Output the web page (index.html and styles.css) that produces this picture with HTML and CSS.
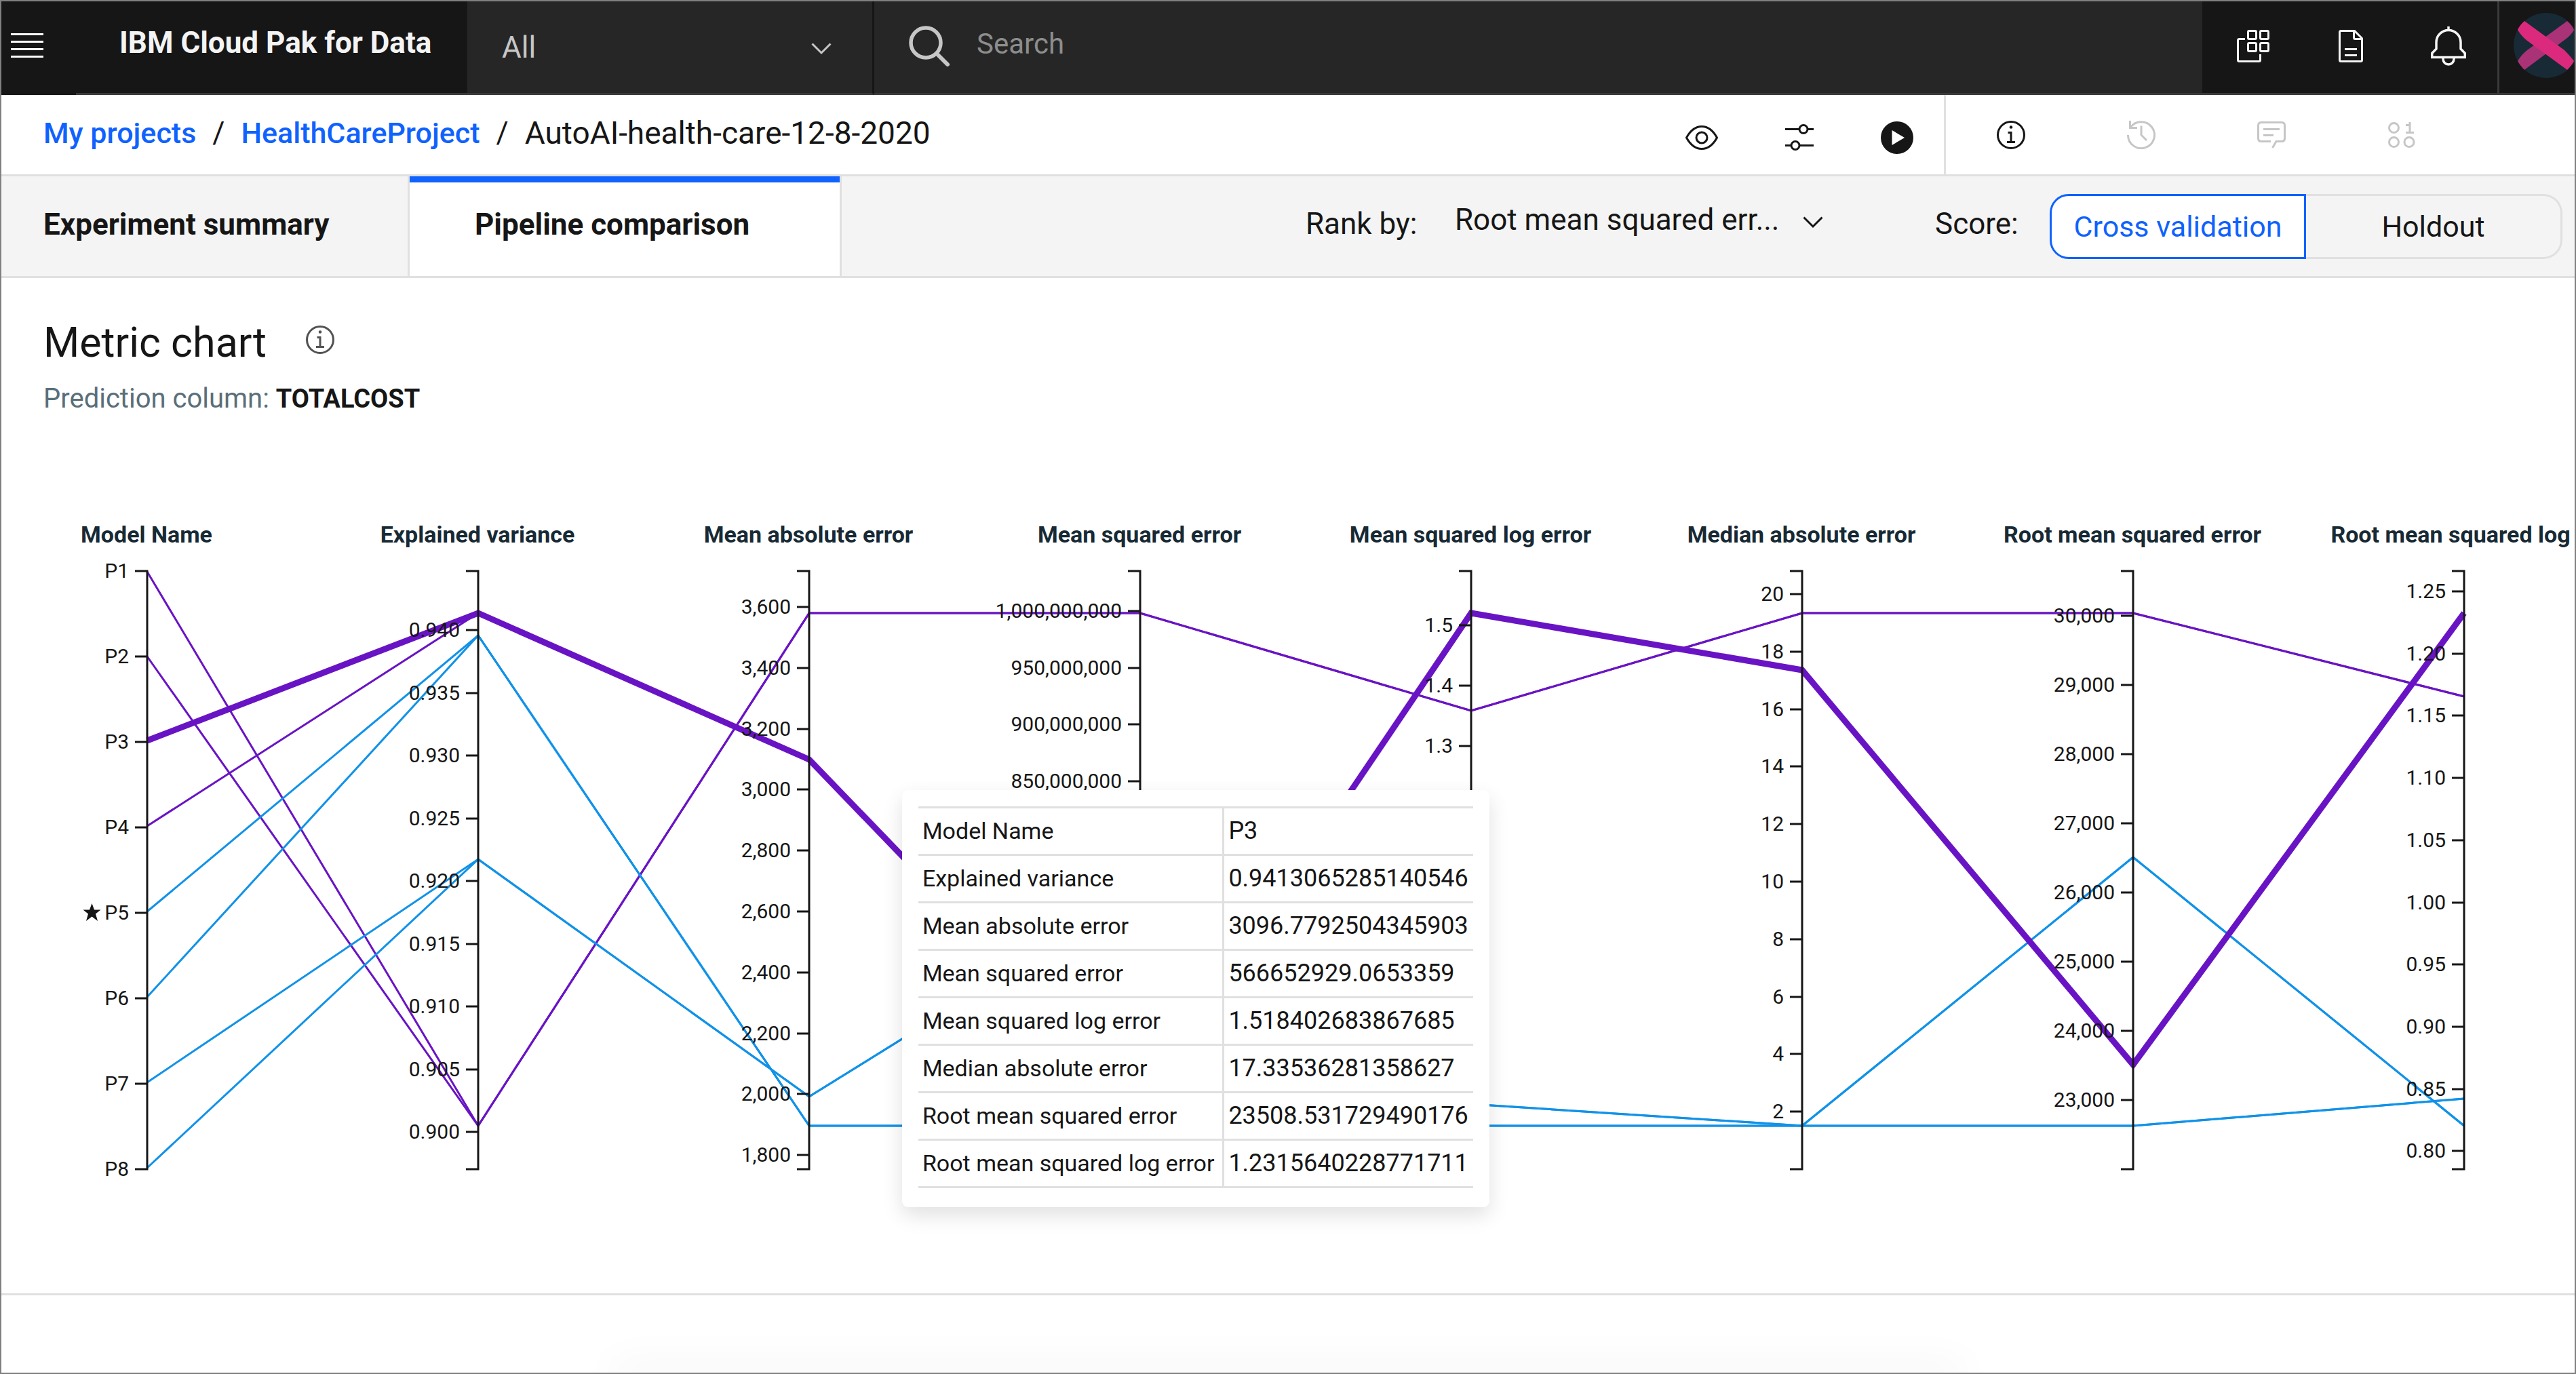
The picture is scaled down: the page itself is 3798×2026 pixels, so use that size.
FILE: index.html
```html
<!DOCTYPE html>
<html lang="en">
<head>
<meta charset="utf-8">
<title>AutoAI-health-care-12-8-2020 - IBM Cloud Pak for Data</title>
<link rel="stylesheet" href="styles.css">
</head>
<body>
<div class="page">
  <header class="topbar">
    <button class="topbar-menu" aria-label="Menu">
      <svg width="48" height="36" viewBox="0 0 48 36"><path d="M0 1.500H48M0 12.500H48M0 23.500H48M0 34.500H48" stroke="#fff" stroke-width="3"/></svg>
    </button>
    <a class="topbar-title" href="#">IBM Cloud Pak for Data</a>
    <div class="scope">
      <select class="scope-select" aria-label="Search scope"><option>All</option></select>
      <svg class="chevron" width="30" height="18" viewBox="0 0 30 18"><path d="M1.500 1.500L15 15L28.500 1.500" fill="none" stroke="#c6c6c6" stroke-width="3"/></svg>
    </div>
    <div class="search">
      <svg width="62" height="62" viewBox="0 0 62 62"><circle cx="25" cy="25" r="22" fill="none" stroke="#c6c6c6" stroke-width="5.500"/><path d="M41 41L57 57" stroke="#c6c6c6" stroke-width="6" stroke-linecap="round"/></svg>
      <input class="search-input" type="search" placeholder="Search" aria-label="Search">
    </div>
    <div class="topbar-actions">
      <button class="topbar-icon" aria-label="Services">
        <svg width="48" height="48" viewBox="0 0 48 48" fill="none" stroke="#f4f4f4" stroke-width="3"><path d="M12 13.500H3.500Q1.500 13.500 1.500 15.500V44.500Q1.500 46.500 3.500 46.500H32.500Q34.500 46.500 34.500 44.500V36"/><rect x="16.500" y="1.500" width="12" height="12" rx="1.500"/><rect x="34.500" y="1.500" width="12" height="12" rx="1.500"/><rect x="16.500" y="19.500" width="12" height="12" rx="1.500"/><rect x="34.500" y="19.500" width="12" height="12" rx="1.500"/></svg>
      </button>
      <button class="topbar-icon" aria-label="Documentation">
        <svg width="36" height="48" viewBox="0 0 36 48" fill="none" stroke="#f4f4f4" stroke-width="3"><path d="M23.500 1.500H3.500Q1.500 1.500 1.500 3.500V44.500Q1.500 46.500 3.500 46.500H32.500Q34.500 46.500 34.500 44.500V12.500Z"/><path d="M22.500 1.500V11.500Q22.500 13.500 24.500 13.500H34.500M9 28.500H27M9 37.500H27"/></svg>
      </button>
      <button class="topbar-icon" aria-label="Notifications">
        <svg width="52" height="58" viewBox="0 0 52 58" fill="none" stroke="#f4f4f4" stroke-width="3.500"><path d="M26 0V6M1.700 45.500V39.500L8 33V23.500A18 18 0 0 1 44 23.500V33L50.300 39.500V45.500ZM18 46V48A8 8 0 0 0 34 48V46"/></svg>
      </button>
    </div>
    <button class="account" aria-label="Account">
      <svg width="96" height="96" viewBox="0 0 96 96"><circle cx="48" cy="48" r="48" fill="#172a35"/><path d="M79 12Q86 18 89 25Q86 31 79 37L16 84Q9 77 6 71Q12 61 20 55Z" fill="#aa3277"/><path d="M16 12Q9 18 6 25Q12 35 20 41L79 84Q86 77 89 71Q82 62 75 55Z" fill="#db2a7d"/></svg>
    </button>
  </header>

  <div class="subbar">
    <nav class="crumbs" aria-label="Breadcrumb">
      <a href="#">My projects</a><span>/</span><a href="#">HealthCareProject</a><span>/</span><span class="crumb-here">AutoAI-health-care-12-8-2020</span>
    </nav>
    <div class="tools">
      <button aria-label="Preview"><svg width="48" height="36" viewBox="0 0 48 36" fill="none" stroke="#161616" stroke-width="3"><path d="M1.500 18C7 8 15 1.500 24 1.500S41 8 46.500 18C41 28 33 34.500 24 34.500S7 28 1.500 18Z" stroke-linejoin="round"/><circle cx="24" cy="18" r="8"/></svg></button>
      <button aria-label="Settings"><svg width="42" height="40" viewBox="0 0 42 40" fill="none" stroke="#161616" stroke-width="3"><path d="M0 7.500H20.500M33.500 7.500H42M0 31.500H8.500M21.500 31.500H42"/><circle cx="27" cy="7.500" r="6"/><circle cx="15" cy="31.500" r="6"/></svg></button>
      <button aria-label="Run"><svg width="48" height="48" viewBox="0 0 48 48"><circle cx="24" cy="24" r="24" fill="#161616"/><path d="M16.500 13L35 24L16.500 35Z" fill="#fff"/></svg></button>
    </div>
    <div class="panels">
      <button aria-label="Information"><svg width="42" height="42" viewBox="0 0 42 42"><circle cx="21" cy="21" r="19.500" fill="none" stroke="#161616" stroke-width="3"/><circle cx="21" cy="9.500" r="2.300" fill="#161616"/><path d="M16.500 17.500H21V31M15 31.500H27" fill="none" stroke="#161616" stroke-width="3"/></svg></button>
      <button aria-label="History" disabled><svg width="42" height="42" viewBox="0 0 42 42" fill="none" stroke="#c6c6c6" stroke-width="3"><path d="M4.500 0V10.500H15M5 10A19.500 19.500 0 1 1 1.500 21M21 7.500V21L29 29"/></svg></button>
      <button aria-label="Comments" disabled><svg width="42" height="40" viewBox="0 0 42 40" fill="none" stroke="#c6c6c6" stroke-width="3"><path d="M20 29.500H6Q1.500 29.500 1.500 25V6Q1.500 1.500 6 1.500H36Q40.500 1.500 40.500 6V25Q40.500 29.500 36 29.500H28L22.500 39M9 11.500H33M9 20.500H24"/></svg></button>
      <button aria-label="Data" disabled><svg width="40" height="38" viewBox="0 0 40 38" fill="none" stroke="#c6c6c6" stroke-width="3"><circle cx="8.500" cy="8.500" r="7"/><circle cx="8.500" cy="29.500" r="7"/><circle cx="31" cy="29.500" r="7"/><path d="M26 4.500H32V15M26 15.500H38M32 0V6"/></svg></button>
    </div>
  </div>

  <div class="tabbar">
    <div class="tabs" role="tablist">
      <button class="tab" role="tab" aria-selected="false">Experiment summary</button>
      <button class="tab tab-active" role="tab" aria-selected="true">Pipeline comparison</button>
    </div>
    <label class="rank-label" for="rank">Rank by:</label>
    <div class="rank">
      <select id="rank" class="rank-select"><option>Root mean squared err...</option></select>
      <svg class="chevron" width="30" height="18" viewBox="0 0 30 18"><path d="M1.500 1.500L15 15L28.500 1.500" fill="none" stroke="#161616" stroke-width="3"/></svg>
    </div>
    <span class="score-label" id="score">Score:</span>
    <div class="switch" role="group" aria-labelledby="score">
      <button class="switch-option switch-on" aria-pressed="true">Cross validation</button>
      <button class="switch-option" aria-pressed="false">Holdout</button>
    </div>
  </div>

  <main class="content">
    <div class="heading">
      <h2>Metric chart</h2>
      <button class="heading-info" aria-label="About this chart"><svg width="42" height="42" viewBox="0 0 42 42"><circle cx="21" cy="21" r="19.500" fill="none" stroke="#525252" stroke-width="3"/><circle cx="21" cy="9.500" r="2.300" fill="#525252"/><path d="M16.500 17.500H21V31M15 31.500H27" fill="none" stroke="#525252" stroke-width="3"/></svg></button>
    </div>
    <p class="prediction">Prediction column: <strong>TOTALCOST</strong></p>
    <div class="chart">
      <svg class="plot" id="plot" viewBox="0 0 3794 1291" role="img" aria-label="Pipeline metrics"></svg>
      <div class="tooltip">
        <table>
          <tr><th scope="row">Model Name</th><td>P3</td></tr>
          <tr><th scope="row">Explained variance</th><td>0.9413065285140546</td></tr>
          <tr><th scope="row">Mean absolute error</th><td>3096.7792504345903</td></tr>
          <tr><th scope="row">Mean squared error</th><td>566652929.0653359</td></tr>
          <tr><th scope="row">Mean squared log error</th><td>1.518402683867685</td></tr>
          <tr><th scope="row">Median absolute error</th><td>17.33536281358627</td></tr>
          <tr><th scope="row">Root mean squared error</th><td>23508.531729490176</td></tr>
          <tr><th scope="row">Root mean squared log error</th><td>1.2315640228771711</td></tr>
        </table>
      </div>
    </div>
  </main>
  <footer class="drawer"><div class="drawer-edge"></div></footer>
</div>
<script src="chart.js"></script>
</body>
</html>
```
FILE: styles.css
```css
* { box-sizing: border-box; }

body {
  margin: 0;
  background: #fff;
  color: #161616;
  font-family: Roboto, "Liberation Sans", sans-serif;
  font-size: 44px;
}

button, select, input {
  margin: 0;
  padding: 0;
  border: 0;
  border-radius: 0;
  background: none;
  color: inherit;
  font: inherit;
  appearance: none;
  outline: none;
}

svg { display: block; flex: none; }
a { color: inherit; text-decoration: none; }

.page {
  display: flex;
  flex-direction: column;
  min-height: 100vh;
  border: 2px solid #808080;
  overflow: hidden;
}

/* top bar */
.topbar { display: flex; height: 138px; background: #161616; color: #f4f4f4; overflow: hidden; }
.topbar-menu { width: 110px; padding-left: 14px; padding-bottom: 8px; }
.topbar-title {
  width: 577px;
  padding-left: 64px;
  border-bottom: 3px solid #393939;
  font-weight: 700;
  line-height: 122px;
  white-space: nowrap;
}
.scope {
  display: flex;
  align-items: center;
  width: 600px;
  padding: 0 60px 0 51px;
  border-right: 3px solid #161616;
  border-bottom: 3px solid #393939;
  background: #262626;
  color: #c6c6c6;
}
.scope-select { flex: 1; line-height: 60px; }
.scope .chevron { margin-top: 4px; }
.search {
  display: flex;
  flex: 1;
  align-items: center;
  gap: 38px;
  padding: 0 40px 2px 51px;
  border-bottom: 3px solid #393939;
  background: #262626;
}
.search-input { flex: 1; min-width: 0; height: 60px; margin-bottom: 8px; color: #f4f4f4; font-size: 42px; }
.search-input::placeholder { color: #8d8d8d; opacity: 1; }
.topbar-actions { display: flex; padding: 0 0 4px 3px; border-bottom: 3px solid #393939; }
.topbar-icon { display: grid; place-items: center; width: 144px; }
.account {
  display: flex;
  align-items: center;
  width: 114px;
  padding: 0 0 5px 21px;
  border-left: 3px solid #393939;
  border-bottom: 3px solid #393939;
  overflow: hidden;
}

/* breadcrumb row */
.subbar { display: flex; height: 120px; border-bottom: 3px solid #e0e0e0; }
.crumbs { display: flex; flex: 1; gap: 24px; padding-left: 62px; line-height: 112px; white-space: nowrap; }
.crumbs a { color: #0f62fe; font-size: 43px; font-weight: 500; }
.crumbs .crumb-here { font-size: 46px; }
.tools, .panels { display: flex; }
.tools { margin-right: -3px; padding-top: 9px; }
.tools button { display: grid; place-items: center; width: 144px; }
.panels { padding-right: 159px; border-left: 3px solid #e0e0e0; }
.panels button { display: grid; place-items: center; width: 192px; }

/* tabs */
.tabbar {
  display: flex;
  align-items: center;
  height: 150px;
  padding-right: 18px;
  border-bottom: 3px solid #e0e0e0;
  background: #f4f4f4;
  white-space: nowrap;
}
.tabs { display: flex; flex: 1; align-self: stretch; }
.tab { width: 599px; padding: 0 62px 6px; text-align: left; font-weight: 700; line-height: 60px; }
.tab-active {
  width: 640px;
  padding: 0 96px 6px;
  border: solid #e0e0e0;
  border-width: 0 3px;
  background: #fff linear-gradient(#0f62fe, #0f62fe) top / 100% 9px no-repeat;
}
.rank-label { width: 220px; padding-bottom: 8px; }
.rank { display: flex; align-items: center; width: 708px; padding-bottom: 20px; }
.rank-select { width: 513px; line-height: 60px; }
.rank .chevron { margin-top: 8px; }
.score-label { width: 169px; padding-bottom: 8px; }
.switch { display: flex; }
.switch-option {
  width: 378px;
  height: 96px;
  border: 3px solid #e0e0e0;
  border-left: 0;
  border-radius: 0 28px 28px 0;
  font-size: 43px;
}
.switch-on {
  border: 3px solid #0f62fe;
  border-radius: 28px 0 0 28px;
  background: #fff;
  color: #0f62fe;
}

/* chart section */
.content { border-bottom: 3px solid #e0e0e0; }
.heading { display: flex; align-items: center; gap: 58px; padding: 55px 62px 0; }
.heading h2 { margin: 0; font-size: 61px; font-weight: 400; line-height: 80px; }
.heading-info { margin-bottom: 8px; }
.prediction { margin: 15px 0 0; padding-left: 62px; color: #5a6f7a; font-size: 40px; line-height: 56px; }
.prediction strong { color: #161616; font-size: 38px; }
.chart { position: relative; }
.plot { width: 100%; height: auto; }
.axis-title { fill: #172a35; font-size: 34px; font-weight: 700; text-anchor: middle; }
.tick-label { fill: #161616; font-size: 30px; text-anchor: end; }
.axis-line { fill: none; stroke: #161616; stroke-width: 3; }
.run { fill: none; stroke-width: 3; }
.run-purple { stroke: #6914c4; }
.run-blue { stroke: #1192e8; }
.run-hover { stroke-width: 9; }

.tooltip {
  position: absolute;
  top: 549px;
  left: 35%;
  width: 866px;
  padding: 24px 24px 28px;
  border-radius: 9px;
  background: #fff;
  box-shadow: 0 12px 30px rgba(0, 0, 0, .12);
}
.tooltip table { width: 100%; border-collapse: collapse; }
.tooltip tr { height: 70px; border: solid #e0e0e0; border-width: 3px 0; }
.tooltip th, .tooltip td { padding: 0 6px 2px; text-align: left; font-weight: 400; white-space: nowrap; }
.tooltip th { width: 450px; border-right: 3px solid #e0e0e0; font-size: 34px; }
.tooltip td { font-size: 36px; }

.drawer { display: flex; flex: 1; flex-direction: column; justify-content: flex-end; }
.drawer-edge { width: 52%; margin: 0 auto; box-shadow: 0 0 60px 10px rgba(0, 0, 0, .07); }
```
FILE: chart.js
```js
const NS = 'http://www.w3.org/2000/svg';
const plot = document.getElementById('plot');
const TOP = 226, BOTTOM = 1108, FIRST = 215, GAP = 488;

// Each axis: title, title position, tick labels, first tick position, distance between ticks
const axes = [
  { title: 'Model Name', ticks: ['P1', 'P2', 'P3', 'P4', 'P5', 'P6', 'P7', 'P8'], from: 226, step: 126 },
  { title: 'Explained variance', ticks: ['0.940', '0.935', '0.930', '0.925', '0.920', '0.915', '0.910', '0.905', '0.900'], from: 313, step: 92.5 },
  { title: 'Mean absolute error', ticks: ['3,600', '3,400', '3,200', '3,000', '2,800', '2,600', '2,400', '2,200', '2,000', '1,800'], from: 279, step: 89.8 },
  { title: 'Mean squared error', ticks: ['1,000,000,000', '950,000,000', '900,000,000', '850,000,000'], from: 285, step: 83.5 },
  { title: 'Mean squared log error', ticks: ['1.5', '1.4', '1.3'], from: 306, step: 89.2 },
  { title: 'Median absolute error', ticks: ['20', '18', '16', '14', '12', '10', '8', '6', '4', '2'], from: 260, step: 84.8 },
  { title: 'Root mean squared error', ticks: ['30,000', '29,000', '28,000', '27,000', '26,000', '25,000', '24,000', '23,000'], from: 292, step: 102 },
  { title: 'Root mean squared log', shift: -19, ticks: ['1.25', '1.20', '1.15', '1.10', '1.05', '1.00', '0.95', '0.90', '0.85', '0.80'], from: 256, step: 91.7 }
];

// Height of each pipeline on every axis
const runs = [
  { color: 'purple', y: [227, 1044, 288, 288, 432, 288, 288, 411] },
  { color: 'purple', y: [352, 1044, 288, 288, 432, 288, 288, 411] },
  { color: 'purple', y: [476, 288, 504, 1010, 288, 372, 954, 288] },
  { color: 'blue', y: [728, 321, 1044, 1044, 1012, 1044, 1044, 1004] },
  { color: 'blue', y: [854, 321, 1044, 1044, 1012, 1044, 1044, 1004] },
  { color: 'blue', y: [980, 651, 1001, 698, 1044, 1044, 648, 1044] },
  { color: 'blue', y: [1106, 651, 1001, 698, 1044, 1044, 648, 1044] },
  { color: 'purple', y: [602, 288, 504, 1010, 288, 372, 954, 288] },
  { color: 'purple run-hover', y: [476, 288, 504, 1010, 288, 372, 954, 288] }
];

function add(name, attrs, text) {
  const el = document.createElementNS(NS, name);
  for (const key in attrs) el.setAttribute(key, attrs[key]);
  if (text) el.textContent = text;
  plot.appendChild(el);
}

for (const run of runs) {
  const points = run.y.map((y, i) => (FIRST + i * GAP) + ',' + y).join(' ');
  add('polyline', { class: 'run run-' + run.color, points });
}

axes.forEach((axis, i) => {
  const x = FIRST + i * GAP;
  let d = `M${x - 18} ${TOP}H${x}V${BOTTOM}H${x - 18}`;
  axis.ticks.forEach((label, n) => {
    const y = Math.round(axis.from + n * axis.step);
    d += `M${x - 18} ${y}H${x}`;
    add('text', { class: 'tick-label', x: x - 27, y: y + 10 }, label);
  });
  add('path', { class: 'axis-line', d });
  add('text', { class: 'axis-title', x: x - 1 + (axis.shift || 0), y: 184 }, axis.title);
});

// Star beside the best pipeline
add('path', { fill: '#161616', d: 'M133.500 716L137 725.500H146.500L139 731.500L142 742L133.500 735.500L125 742L128 731.500L120.500 725.500H130Z' });
```
